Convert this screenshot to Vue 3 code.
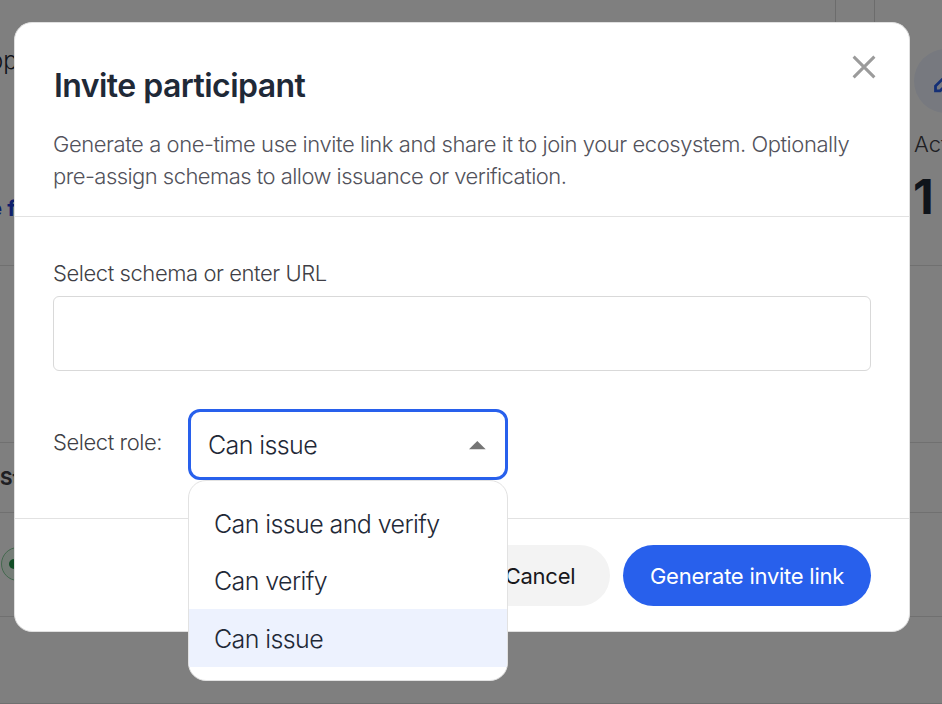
<script setup>
import { ref } from 'vue'

const roles = [
  { id: 'both', label: 'Can issue and verify' },
  { id: 'verify', label: 'Can verify' },
  { id: 'issue', label: 'Can issue' },
]
const selected = ref('issue')
const schema = ref('')
</script>

<template>
  <div class="screen">
    <div class="page">
      <section class="row overview">
        <div class="left-card">
          <span class="copy">op</span>
          <span class="link">e f</span>
        </div>
        <div class="gutter"></div>
        <div class="right-card">
          <span class="heading">S</span>
          <div class="round">
            <svg width="28" height="28" viewBox="0 0 24 24" fill="none" stroke="#285fec" stroke-width="2.4">
              <path d="M3 20.400v-4L14.600 4.800l4 4L7 20.400z" />
            </svg>
          </div>
          <span class="stat-label">Act</span>
          <span class="stat">1</span>
        </div>
      </section>
      <section class="row blank"></section>
      <section class="row columns"><b>St</b></section>
      <section class="row entry"><span class="pill"><i></i></span></section>
      <section class="row last"></section>
    </div>

    <div class="backdrop">
      <div class="modal" role="dialog">
        <header>
          <div class="title-line">
            <h1>Invite participant</h1>
            <button class="close" aria-label="Close">
              <svg width="24" height="24" viewBox="0 0 24 24" stroke="#9b9b9b" stroke-width="3" fill="none">
                <path d="M1.600 1.600L22.400 22.400M22.400 1.600L1.600 22.400" />
              </svg>
            </button>
          </div>
          <p>
            <span class="line-one">Generate a one-time use invite link and share it to join your ecosystem. Optionally</span><br />
            <span class="line-two">pre-assign schemas to allow issuance or verification.</span>
          </p>
        </header>
        <main>
          <label class="schema-label" for="schema">Select schema or enter URL</label>
          <input id="schema" v-model="schema" class="schema-input" />
          <div class="role-row">
            <span class="role-label">Select role:</span>
            <div class="select">
              <div class="select-box">
                <span>Can issue</span>
                <svg width="17" height="9" viewBox="0 0 17 9"><path d="M0 8.300L8.300 0l8.400 8.300z" fill="#757575" /></svg>
              </div>
              <ul class="menu">
                <li
                  v-for="role in roles"
                  :key="role.id"
                  :class="[role.id, { active: role.id === selected }]"
                  @click="selected = role.id"
                >
                  <span>{{ role.label }}</span>
                </li>
              </ul>
            </div>
          </div>
        </main>
        <footer>
          <button class="cancel"><span>Cancel</span></button>
          <button class="generate"><span>Generate invite link</span></button>
        </footer>
      </div>
    </div>
  </div>
</template>

<style>
body {
  overflow: hidden;
}
</style>

<style scoped>
* {
  box-sizing: border-box;
}
.screen {
  position: relative;
  width: 942px;
  height: 704px;
  overflow: hidden;
  font-family: Inter, 'Liberation Sans', sans-serif;
  font-weight: 300;
}
.page {
  height: 704px;
  background: #fff;
  color: #1f2937;
}
.row {
  border-bottom: 1px solid #e0e0e0;
  overflow: hidden;
}
.overview {
  display: flex;
  height: 266px;
}
.left-card {
  display: flex;
  flex: none;
  flex-direction: column;
  width: 836px;
  border-right: 1px solid #d8d8d8;
}
.copy {
  margin: 46px 0 0 -11px;
  font-size: 24px;
  line-height: 30px;
}
.link {
  margin: 117px 0 0 -11px;
  font-size: 22px;
  line-height: 30px;
  font-weight: 700;
  color: #1d3fd8;
}
.gutter {
  flex: none;
  width: 38px;
}
.right-card {
  display: flex;
  flex: none;
  flex-direction: column;
  width: 160px;
  border-left: 1px solid #d8d8d8;
  padding-left: 39px;
}
.heading {
  height: 50px;
  margin: -36px 0 0 1px;
  font-size: 34px;
  line-height: 38px;
  font-weight: 700;
}
.round {
  display: flex;
  align-items: center;
  justify-content: center;
  flex: none;
  width: 64px;
  height: 64px;
  margin-top: 35px;
  border-radius: 50%;
  background: #eef3ff;
}
.stat-label {
  margin-top: 16px;
  font-size: 22px;
  line-height: 30px;
  color: #3f3f46;
}
.stat {
  margin: 11px 0 0 -1px;
  font-size: 48px;
  line-height: 54px;
  font-weight: 700;
}
.blank {
  height: 177px;
}
.columns {
  height: 70px;
  padding-top: 21px;
  font-size: 19px;
  line-height: 30px;
  color: #3f3f46;
}
.columns b {
  font-weight: 700;
}
.entry {
  height: 104px;
  padding: 34px 0 0 1px;
}
.pill {
  display: flex;
  align-items: center;
  width: 130px;
  height: 34px;
  padding-left: 7px;
  border: 1px solid #86d19c;
  border-radius: 17px;
  background: #ebfaef;
}
.pill i {
  width: 10px;
  height: 10px;
  border-radius: 50%;
  background: #22994a;
}
.last {
  height: 87px;
}
.backdrop {
  position: absolute;
  inset: 0;
  display: flex;
  align-items: flex-start;
  padding: 22px 32px 0 14px;
  background: rgba(0, 0, 0, 0.5);
}
.modal {
  display: flex;
  flex-direction: column;
  width: 896px;
  height: 610px;
  border: 1px solid #e0e0e0;
  border-radius: 18px;
  background: #fff;
}
header {
  height: 194px;
  padding: 30px 33px 0 38px;
  border-bottom: 1px solid #e2e2e2;
}
.title-line {
  display: flex;
  justify-content: space-between;
}
h1 {
  margin: 13px 0 0 1px;
  font-size: 32px;
  line-height: 40px;
  font-weight: 600;
  color: #1f2937;
  letter-spacing: -0.55px;
  white-space: nowrap;
}
button {
  border: 0;
  font-family: inherit;
}
.close {
  display: flex;
  height: 24px;
  margin-top: 2px;
  padding: 0;
  background: none;
}
p {
  margin: 22px 0 0;
  font-size: 22px;
  line-height: 32px;
  color: #52525b;
  letter-spacing: -0.44px;
  white-space: nowrap;
}
.line-two {
  letter-spacing: -0.54px;
}
main {
  display: flex;
  flex-direction: column;
  height: 302px;
  padding: 41px 38px 0;
  border-bottom: 1px solid #e2e2e2;
}
.schema-label,
.role-label {
  font-size: 22px;
  line-height: 30px;
  letter-spacing: -0.43px;
  color: #3f3f46;
  white-space: nowrap;
}
.schema-input {
  width: 818px;
  height: 75px;
  margin-top: 8px;
  padding: 0 16px;
  border: 1px solid #d9d9d9;
  border-radius: 6px;
  outline: none;
}
.role-row {
  display: flex;
  align-items: flex-start;
  margin-top: 38px;
}
.role-label {
  width: 135px;
  margin-top: 18px;
}
.select {
  position: relative;
  width: 320px;
}
.select-box {
  display: flex;
  align-items: center;
  justify-content: space-between;
  height: 71px;
  padding: 1px 19px 0 17px;
  border: 3px solid #2860ec;
  border-radius: 12px;
  font-size: 25px;
  letter-spacing: -0.6px;
  color: #1f2937;
}
.menu {
  position: absolute;
  top: 71px;
  left: 0;
  z-index: 2;
  width: 320px;
  height: 201px;
  margin: 0;
  padding: 13px 0 0;
  list-style: none;
  border: 1px solid #e2e2e2;
  border-radius: 18px;
  background: #fff;
  overflow: hidden;
}
.menu li {
  display: flex;
  align-items: center;
  height: 58px;
  padding: 2px 0 0 25px;
  font-size: 25px;
  letter-spacing: -0.6px;
  color: #1f2937;
  white-space: nowrap;
}
.menu .verify {
  height: 57px;
  padding-top: 0;
}
.menu .active {
  background: #edf2fe;
}
footer {
  display: flex;
  justify-content: flex-end;
  gap: 13px;
  padding: 26px 38px 0;
}
footer button {
  height: 61px;
  border-radius: 31px;
  font-size: 22px;
  font-weight: 400;
  letter-spacing: -0.25px;
  white-space: nowrap;
}
.cancel {
  width: 140px;
  background: #f3f3f3;
  color: #18181b;
}
.generate {
  width: 248px;
  background: #2860ec;
  color: #fff;
}
</style>
